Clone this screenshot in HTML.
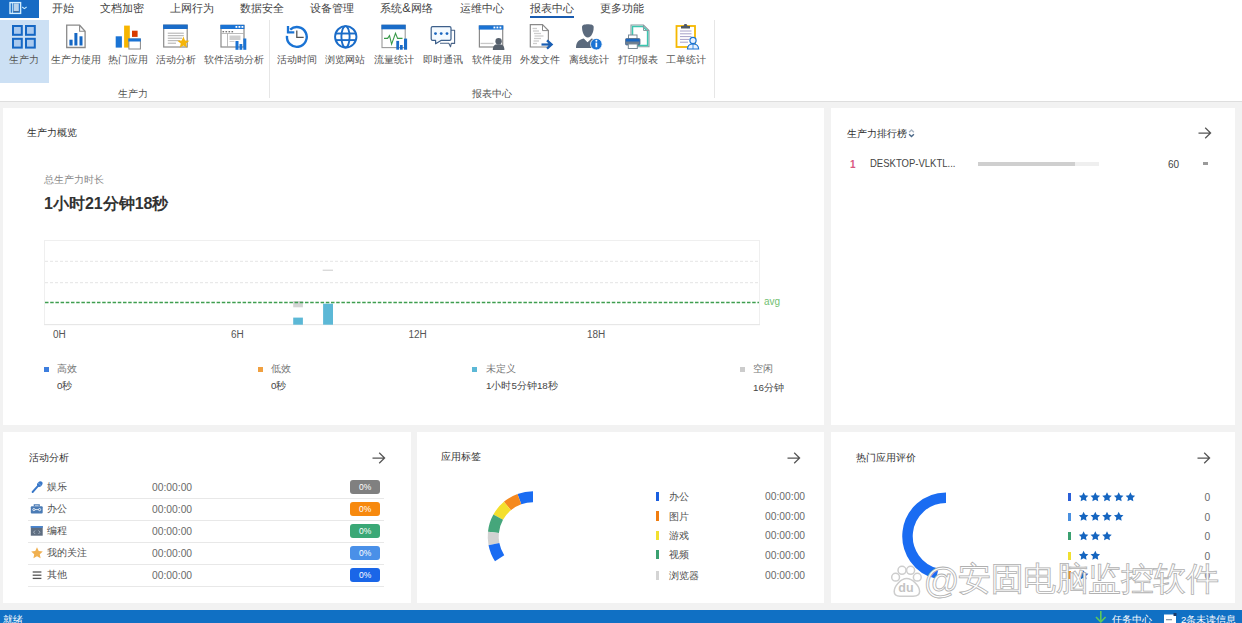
<!DOCTYPE html>
<html><head><meta charset="utf-8">
<style>
*{margin:0;padding:0;box-sizing:border-box}
html,body{width:1242px;height:623px;overflow:hidden;background:#f2f2f2;font-family:"Liberation Sans",sans-serif;color:#444}
.a{position:absolute;white-space:nowrap;line-height:1}
.c{width:120px;text-align:center}
#top{position:absolute;left:0;top:0;width:1242px;height:102px;background:#fff;border-bottom:1px solid #dedede}
.menu{font-size:11px;color:#444;top:2.5px}
.rl{font-size:9.6px;color:#555}
.gl{font-size:9.6px;color:#555}
.panel{position:absolute;background:#fff}
.pt{font-size:9.6px;color:#333}
#status{position:absolute;left:0;top:610px;width:1242px;height:13px;background:#1070c4}
.ax{font-size:10px;color:#555;top:329.5px}
.lg{font-size:9.8px;color:#777;top:363.5px}
.lv{font-size:9.8px;color:#444;top:381px}
.rw{font-size:9.6px;color:#505050}
.tm{font-size:10.3px;color:#6a6a6a}
.bd{width:30px;height:14px;border-radius:3px;color:#fff;font-size:8.5px;text-align:center;line-height:14px}
.sb{font-size:9.65px;color:#fff;top:615px}
.wm{font-size:32.5px;color:#fff;-webkit-text-stroke:0.8px #b0b0b0;font-weight:normal}

</style></head><body>
<div id="top">
<div class="a" style="left:0;top:0;width:38.5px;height:17.5px;background:#176bc4"></div>
<div class="a menu" style="left:52px">开始</div>
<div class="a menu" style="left:100px">文档加密</div>
<div class="a menu" style="left:170px">上网行为</div>
<div class="a menu" style="left:240px">数据安全</div>
<div class="a menu" style="left:310px">设备管理</div>
<div class="a menu" style="left:380px">系统<span style="font-size:12.5px;line-height:1px;margin:0 0.6px 0 0.3px">&amp;</span>网络</div>
<div class="a menu" style="left:460px">运维中心</div>
<div class="a menu" style="left:530px">报表中心</div>
<div class="a menu" style="left:600px">更多功能</div>
<div class="a" style="left:530px;top:15.5px;width:44px;height:2px;background:#1a5cb0"></div>
<div class="a" style="left:0;top:20px;width:48.5px;height:62.5px;background:#cce0f4"></div>
<div class="a c rl" style="left:-35.9px;top:55px;">生产力</div>
<div class="a c rl" style="left:16.0px;top:55px;">生产力使用</div>
<div class="a c rl" style="left:68.0px;top:55px;">热门应用</div>
<div class="a c rl" style="left:115.9px;top:55px;">活动分析</div>
<div class="a c rl" style="left:173.5px;top:55px;">软件活动分析</div>
<div class="a c rl" style="left:236.8px;top:55px;">活动时间</div>
<div class="a c rl" style="left:285.4px;top:55px;">浏览网站</div>
<div class="a c rl" style="left:334.2px;top:55px;">流量统计</div>
<div class="a c rl" style="left:382.8px;top:55px;">即时通讯</div>
<div class="a c rl" style="left:431.7px;top:55px;">软件使用</div>
<div class="a c rl" style="left:479.9px;top:55px;">外发文件</div>
<div class="a c rl" style="left:528.7px;top:55px;">离线统计</div>
<div class="a c rl" style="left:577.5px;top:55px;">打印报表</div>
<div class="a c rl" style="left:626.2px;top:55px;">工单统计</div>
<div class="a" style="left:269px;top:20px;width:1px;height:78px;background:#e6e6e6"></div>
<div class="a" style="left:714px;top:20px;width:1px;height:78px;background:#e6e6e6"></div>
<svg class="a" style="left:0;top:0" width="720" height="101" viewBox="0 0 720 101">
 <!-- top-left app menu icon -->
 <rect x="10" y="2.6" width="10.6" height="10.8" fill="none" stroke="#d4efff" stroke-width="1.4"/>
 <line x1="12.4" y1="3" x2="12.4" y2="13" stroke="#d4efff" stroke-width="0.9"/>
 <rect x="13.6" y="3.4" width="5.2" height="8.2" fill="#b8d2ea"/>
 <rect x="13.6" y="11" width="5.2" height="0.8" fill="#3a5a80"/>
 <path d="M22.2 7 L24.4 8.6 L26.6 7" fill="none" stroke="#c8ecff" stroke-width="1.1"/>
 <!-- 1 grid -->
 <g stroke="#1567c4" stroke-width="2" fill="#a9c9ee">
  <rect x="13" y="26" width="8.8" height="8.8"/>
  <rect x="26" y="26" width="8.8" height="8.8"/>
  <rect x="13" y="38.8" width="8.8" height="8.8"/>
  <rect x="26" y="38.8" width="8.8" height="8.8"/>
 </g>
 <!-- 2 doc with bars -->
 <path d="M66.7 25.2 H79.6 L85.1 31.3 V47.5 H66.7 Z" fill="#fff" stroke="#8a8a8a" stroke-width="1.3"/>
 <path d="M79.6 25.2 V31.3 H85.1" fill="none" stroke="#8a8a8a" stroke-width="1.1"/>
 <rect x="69.4" y="39.7" width="3.2" height="5.8" fill="#1567c4"/>
 <rect x="74.4" y="33" width="3" height="12.5" fill="#1567c4"/>
 <rect x="79.5" y="36.3" width="3" height="9.2" fill="#1567c4"/>
 <!-- 3 hot apps -->
 <rect x="115.7" y="36.3" width="6.2" height="11.3" fill="#1a73d4"/>
 <rect x="124.1" y="25.6" width="5.7" height="22" fill="#f7b500"/>
 <rect x="132" y="30.7" width="5.6" height="6.2" fill="#d83b01"/>
 <rect x="128.9" y="39" width="11.5" height="10" fill="#fff" stroke="#888" stroke-width="1"/>
 <rect x="128.4" y="38.5" width="12.4" height="3" fill="#1a73d4"/>
 <!-- 4 activity analysis -->
 <rect x="163.7" y="25.2" width="23.5" height="21.8" fill="#fff" stroke="#8a8a8a" stroke-width="1.2"/>
 <rect x="163.1" y="24.6" width="24.6" height="4.4" fill="#1a6cc8"/>
 <g stroke="#a4a4a4" stroke-width="0.9">
  <line x1="167.8" y1="33.2" x2="183.8" y2="33.2"/>
  <line x1="167.8" y1="35.7" x2="183.8" y2="35.7"/>
  <line x1="167.8" y1="38.2" x2="182" y2="38.2"/>
  <line x1="167.8" y1="40.7" x2="180" y2="40.7"/>
  <line x1="167.8" y1="43.2" x2="176" y2="43.2"/>
 </g>
 <polygon points="183.40,36.40 185.03,40.45 189.39,40.75 186.04,43.55 187.10,47.80 183.40,45.48 179.70,47.80 180.76,43.55 177.41,40.75 181.77,40.45" fill="#f5b50a"/>
 <!-- 5 software activity analysis -->
 <rect x="221" y="25.4" width="23" height="21.6" fill="#fff" stroke="#8a8a8a" stroke-width="1.2"/>
 <rect x="220.4" y="24.8" width="24" height="4.2" fill="#1a73d4"/>
 <g fill="#fff"><rect x="235.5" y="26" width="1.8" height="1.8"/><rect x="238.5" y="26" width="1.8" height="1.8"/><rect x="241.5" y="26" width="1.8" height="1.8"/></g>
 <g fill="#777"><rect x="222.5" y="31" width="1.6" height="1.4"/><rect x="225.5" y="31" width="1.6" height="1.4"/><rect x="228.5" y="31" width="1.6" height="1.4"/><rect x="231.5" y="31" width="1.6" height="1.4"/></g>
 <line x1="221" y1="33.5" x2="244" y2="33.5" stroke="#aaa" stroke-width="0.8"/>
 <line x1="227.5" y1="33.5" x2="227.5" y2="47" stroke="#aaa" stroke-width="0.8"/>
 <rect x="229.5" y="35.5" width="11" height="4.5" fill="#cfcfcf"/>
 <rect x="229.5" y="41" width="5" height="1" fill="#cfcfcf"/>
 <rect x="235.5" y="41" width="3" height="8.8" fill="#1a73d4"/>
 <rect x="239.5" y="44" width="2.8" height="5.8" fill="#1a73d4"/>
 <rect x="243.3" y="38.5" width="3" height="11.3" fill="#1a73d4"/>
 <!-- 6 clock -->
 <path d="M287 35.8 A9.9 9.9 0 1 0 290.2 29.6" fill="none" stroke="#1a73d4" stroke-width="2.4"/>
 <path d="M288 26 V32.3 H294.3" fill="none" stroke="#1a73d4" stroke-width="2.3" stroke-linejoin="miter"/>
 <path d="M296.8 30.4 V37.4 H303.7" fill="none" stroke="#555" stroke-width="1.3"/>
 <!-- 7 globe -->
 <g fill="none" stroke="#1a6cc8" stroke-width="1.9">
  <circle cx="345.75" cy="36.8" r="10.7"/>
  <ellipse cx="345.5" cy="36.8" rx="4.1" ry="10.7"/>
  <line x1="335.5" y1="33.5" x2="356" y2="33.5"/>
  <line x1="335.5" y1="40.1" x2="356" y2="40.1"/>
 </g>
 <!-- 8 traffic -->
 <rect x="382" y="25.3" width="23.2" height="22.3" fill="#fff" stroke="#9a9a9a" stroke-width="1.1"/>
 <rect x="381.4" y="24.7" width="24.3" height="4.6" fill="#1a6cc8"/>
 <path d="M384 38.4 H387.6 L389.5 35.6 L391.6 44.2 L395.5 33.3 L397.6 38.4 H402.5" fill="none" stroke="#3a9a4a" stroke-width="1.1"/>
 <rect x="396.3" y="40.9" width="2.8" height="8.8" fill="#1a6cc8"/>
 <rect x="400" y="45" width="2.7" height="4.7" fill="#1a6cc8"/>
 <rect x="404" y="38.6" width="3.1" height="11.1" fill="#1a6cc8"/>
 <!-- 9 chat -->
 <path d="M440 43.2 H448.8 L450.5 46.8 L451.3 43.4 H454.6 V30.2 H450.5" fill="none" stroke="#4a6488" stroke-width="1.1" stroke-linejoin="round"/>
 <path d="M432.6 26.6 H449.6 Q451 26.6 451 28 V39 Q451 40.4 449.6 40.4 H441 L435.6 43.8 V40.4 H432.6 Q431.2 40.4 431.2 39 V28 Q431.2 26.6 432.6 26.6 Z" fill="#f4faff" stroke="#3d5f8a" stroke-width="1.2" stroke-linejoin="round"/>
 <g fill="#1a66c0"><circle cx="435.5" cy="33.6" r="1.4"/><circle cx="441.2" cy="33.6" r="1.4"/><circle cx="447" cy="33.6" r="1.4"/></g>
 <!-- 10 software usage -->
 <rect x="479.4" y="26" width="23.3" height="21" fill="#fff" stroke="#8a8a8a" stroke-width="1.2"/>
 <rect x="478.8" y="25.4" width="24.5" height="4.2" fill="#1a73d4"/>
 <g fill="#fff"><rect x="493.5" y="26.6" width="1.8" height="1.8"/><rect x="496.5" y="26.6" width="1.8" height="1.8"/><rect x="499.5" y="26.6" width="1.8" height="1.8"/></g>
 <rect x="480.5" y="42.8" width="13" height="1.3" fill="#c8c8c8"/>
 <circle cx="498.6" cy="41.3" r="3.2" fill="#56606c"/>
 <path d="M492.8 50 C492.8 45.5 494.8 44.3 498.6 44.3 C502.4 44.3 504.4 45.5 504.4 50 Z" fill="#56606c"/>
 <!-- 11 outgoing file -->
 <path d="M530.3 24.6 H542.5 L548.4 30.6 V47 H530.3 Z" fill="#fff" stroke="#8a8a8a" stroke-width="1.2"/>
 <path d="M542.5 24.6 V30.6 H548.4" fill="none" stroke="#8a8a8a" stroke-width="1"/>
 <g stroke="#cdcdcd" stroke-width="1.3">
  <line x1="532.5" y1="28.5" x2="537" y2="28.5"/><line x1="533" y1="31" x2="539" y2="31"/>
  <line x1="534" y1="33.5" x2="541" y2="33.5"/><line x1="534.5" y1="36" x2="543.5" y2="36"/>
  <line x1="534" y1="38.5" x2="541" y2="38.5"/><line x1="533.5" y1="41" x2="539" y2="41"/>
  <line x1="533" y1="43.5" x2="537" y2="43.5"/>
 </g>
 <path d="M541.5 44.5 H551" stroke="#1a5fb4" stroke-width="2.2"/>
 <path d="M547 40.3 L551.6 44.5 L547 48.7" fill="none" stroke="#1a5fb4" stroke-width="2.3"/>
 <!-- 12 offline person -->
 <path d="M582 27 C582 24.8 584.5 24.2 587.8 24.2 C591.1 24.2 593.7 24.8 593.7 27 C593.7 32 591.5 37.4 587.8 37.4 C584.1 37.4 582 32 582 27 Z" fill="#5b6a7d"/>
 <path d="M576 48 C576 42 578.5 39.7 583.8 38.5 L587.5 42.3 L591.6 38.5 C595 39.2 597 40.5 598 42 L595 48 Z" fill="#5b6a7d"/>
 <path d="M584.6 38.4 L587.5 41.6 L590.6 38.4" fill="none" stroke="#fff" stroke-width="0.9"/>
 <circle cx="596.3" cy="44.2" r="5.8" fill="#1a73d4" stroke="#fff" stroke-width="0.8"/>
 <rect x="595.5" y="42.6" width="1.7" height="4.6" fill="#fff"/>
 <circle cx="596.35" cy="40.8" r="1" fill="#fff"/>
 <!-- 13 print -->
 <path d="M631 25 H643.5 L649 30.5 V46.8 H631 Z" fill="#fff" stroke="#8a9aa0" stroke-width="1.1"/>
 <path d="M632.5 26.5 H642.8 L647.6 31.2 V45.5 H632.5 Z" fill="none" stroke="#3cc6b0" stroke-width="1.5"/>
 <path d="M643.5 25 V30.5 H649" fill="none" stroke="#8a9aa0" stroke-width="1"/>
 <rect x="628.5" y="35" width="8.5" height="4" fill="#fff" stroke="#7a8a96" stroke-width="1"/>
 <rect x="625.5" y="38.5" width="14.5" height="6.5" rx="1" fill="#1a66c0" stroke="#5a7088" stroke-width="0.8"/>
 <rect x="626" y="41.5" width="13.5" height="3" fill="#6c7d8f"/>
 <rect x="628.3" y="44" width="9" height="4.5" fill="#fff" stroke="#7a8a96" stroke-width="1"/>
 <!-- 14 work order -->
 <rect x="676.5" y="26" width="18.5" height="21" fill="#fff" stroke="#f5b800" stroke-width="1.8"/>
 <path d="M681 28.5 V26 H683.5 L684.5 24 L686.5 24 L687.5 26 H690 V28.5 Z" fill="#505a66"/>
 <g stroke="#a6a2c8" stroke-width="1">
  <line x1="680" y1="31" x2="691.5" y2="31"/><line x1="680" y1="33.8" x2="691.5" y2="33.8"/>
  <line x1="680" y1="36.6" x2="691.5" y2="36.6"/><line x1="680" y1="39.4" x2="689" y2="39.4"/>
  <line x1="680" y1="42.2" x2="688" y2="42.2"/>
 </g>
 <path d="M687.5 49 C687.5 45 689.5 44 693 44 C696.5 44 698.6 45 698.6 49 Z" fill="#e8f2ff" stroke="#1a73d4" stroke-width="1.2"/>
 <circle cx="693" cy="40.5" r="3.1" fill="#e8f2ff" stroke="#1a73d4" stroke-width="1.2"/>
 <line x1="693" y1="44" x2="693" y2="49" stroke="#1a73d4" stroke-width="0.8"/>
</svg>

<div class="a c gl" style="left:72.5px;top:89px;">生产力</div>
<div class="a c gl" style="left:431.5px;top:89px;">报表中心</div>
</div>
<div class="panel" style="left:3px;top:108px;width:821px;height:317px"></div>
<div class="panel" style="left:831px;top:108px;width:404px;height:317px"></div>
<div class="panel" style="left:3px;top:432px;width:408px;height:171px"></div>
<div class="panel" style="left:417px;top:432px;width:407px;height:171px"></div>
<div class="panel" style="left:831px;top:432px;width:404px;height:171px"></div>

<div class="a pt" style="left:27px;top:128px">生产力概览</div>
<div class="a" style="left:44px;top:175px;font-size:9.5px;color:#888">总生产力时长</div>
<div class="a" style="left:44px;top:196px;font-size:16px;font-weight:bold;color:#333">1小时21分钟18秒</div>

<svg class="a" style="left:0;top:230px" width="830" height="110" viewBox="0 230 830 110">
 <rect x="44.5" y="240.5" width="715" height="84" fill="none" stroke="#efefef" stroke-width="1"/>
 <line x1="45" y1="261.3" x2="759" y2="261.3" stroke="#e2e2e2" stroke-width="0.9" stroke-dasharray="3 2"/>
 <line x1="45" y1="282.7" x2="759" y2="282.7" stroke="#e2e2e2" stroke-width="0.9" stroke-dasharray="3 2"/>
 <line x1="44" y1="324.7" x2="760" y2="324.7" stroke="#e6e6e6" stroke-width="1"/>
 <line x1="322.7" y1="270.2" x2="333" y2="270.2" stroke="#c4c4c4" stroke-width="0.9"/>
 <rect x="293.2" y="301" width="9.7" height="6.3" fill="#d4d4d4"/>
 <rect x="293.2" y="317.6" width="9.7" height="7.1" fill="#5cb8d6"/>
 <rect x="323.1" y="303.7" width="9.9" height="21" fill="#5cb8d6"/>
 <line x1="45" y1="302.5" x2="759" y2="302.5" stroke="#3f9e4f" stroke-width="1.3" stroke-dasharray="3.5 1.7"/>
</svg>
<div class="a" style="left:764px;top:297px;font-size:10px;color:#72bf72">avg</div>
<div class="a ax" style="left:53px">0H</div>
<div class="a ax" style="left:231px">6H</div>
<div class="a ax" style="left:408.5px">12H</div>
<div class="a ax" style="left:587px">18H</div>

<div class="a" style="left:43.7px;top:367px;width:5px;height:4.5px;background:#3d7ede"></div>
<div class="a lg" style="left:57px">高效</div>
<div class="a lv" style="left:57px">0秒</div>
<div class="a" style="left:257.7px;top:367px;width:5px;height:4.5px;background:#f0a040"></div>
<div class="a lg" style="left:271px">低效</div>
<div class="a lv" style="left:271px">0秒</div>
<div class="a" style="left:472.4px;top:367px;width:5px;height:4.5px;background:#5cb8d6"></div>
<div class="a lg" style="left:486px">未定义</div>
<div class="a lv" style="left:486px">1小时5分钟18秒</div>
<div class="a" style="left:739.6px;top:367px;width:5px;height:4.5px;background:#cccccc"></div>
<div class="a lg" style="left:753px">空闲</div>
<div class="a lv" style="left:753px;top:382.5px">16分钟</div>

<div class="a pt" style="left:847px;top:129px">生产力排行榜</div>
<svg class="a" style="left:908px;top:128px" width="8" height="10" viewBox="0 0 8 10">
 <path d="M1.1 4.2 L3.5 1.9 L5.9 4.2" fill="none" stroke="#aab6c4" stroke-width="1.4"/>
 <path d="M1.1 6.2 L3.5 8.5 L5.9 6.2" fill="none" stroke="#4a6888" stroke-width="1.4"/>
</svg>
<div class="a" style="left:850px;top:159.5px;font-size:10px;font-weight:bold;color:#d9587f">1</div>
<div class="a" style="left:870px;top:159.3px;font-size:10.4px;color:#444;transform:scaleX(0.915);transform-origin:0 0">DESKTOP-VLKTL...</div>
<div class="a" style="left:978px;top:162px;width:120.6px;height:3.8px;background:#efefef"></div>
<div class="a" style="left:978px;top:162px;width:96.8px;height:3.8px;background:#cfcfcf"></div>
<div class="a" style="left:1168px;top:160px;font-size:10px;color:#444">60</div>
<div class="a" style="left:1202.5px;top:162px;width:5.8px;height:2.8px;background:#9a9a9a"></div>

<svg class="a" style="left:1198px;top:127px" width="14" height="12" viewBox="0 0 14 12"><path d="M0.5 6 H12.6 M7.2 0.8 L12.6 6 L7.2 11.2" fill="none" stroke="#555" stroke-width="1.25"/></svg>
<div class="a pt" style="left:28.5px;top:453px">活动分析</div>
<svg class="a" style="left:371.5px;top:451.5px" width="14" height="12" viewBox="0 0 14 12"><path d="M0.5 6 H12.6 M7.2 0.8 L12.6 6 L7.2 11.2" fill="none" stroke="#555" stroke-width="1.25"/></svg>
<div class="a rw" style="left:46.5px;top:481.5px">娱乐</div>
<div class="a tm" style="left:152px;top:483.0px">00:00:00</div>
<div class="a bd" style="left:350.2px;top:480px;background:#808080">0%</div>
<div class="a" style="left:28px;top:498px;width:356px;height:1px;background:#e8e8e8"></div>
<div class="a rw" style="left:46.5px;top:503.5px">办公</div>
<div class="a tm" style="left:152px;top:505.0px">00:00:00</div>
<div class="a bd" style="left:350.2px;top:502px;background:#f7890e">0%</div>
<div class="a" style="left:28px;top:520px;width:356px;height:1px;background:#e8e8e8"></div>
<div class="a rw" style="left:46.5px;top:525.5px">编程</div>
<div class="a tm" style="left:152px;top:527.0px">00:00:00</div>
<div class="a bd" style="left:350.2px;top:524px;background:#3aa876">0%</div>
<div class="a" style="left:28px;top:542px;width:356px;height:1px;background:#e8e8e8"></div>
<div class="a rw" style="left:46.5px;top:547.5px">我的关注</div>
<div class="a tm" style="left:152px;top:549.0px">00:00:00</div>
<div class="a bd" style="left:350.2px;top:546px;background:#4a90e8">0%</div>
<div class="a" style="left:28px;top:564px;width:356px;height:1px;background:#e8e8e8"></div>
<div class="a rw" style="left:46.5px;top:569.5px">其他</div>
<div class="a tm" style="left:152px;top:571.0px">00:00:00</div>
<div class="a bd" style="left:350.2px;top:568px;background:#1a66e8">0%</div>
<div class="a" style="left:28px;top:586px;width:356px;height:1px;background:#e8e8e8"></div>
<svg class="a" style="left:28px;top:478px" width="18" height="106" viewBox="28 478 18 106">
 <path d="M32.6 492 L37.6 486.3" stroke="#3a78c8" stroke-width="1.9" stroke-linecap="round"/>
 <ellipse cx="39.8" cy="484.1" rx="3.1" ry="2.3" transform="rotate(-48 39.8 484.1)" fill="#3a78c8"/>
 <line x1="38" y1="482.8" x2="41.2" y2="485.6" stroke="#9cc0ea" stroke-width="0.6"/>
 <rect x="30.8" y="506.3" width="11.9" height="7.3" rx="1" fill="#4a7bb5"/>
 <path d="M34.3 506.3 V504.9 H39.2 V506.3" fill="none" stroke="#4a7bb5" stroke-width="1.2"/>
 <circle cx="33.9" cy="509.6" r="1.1" fill="none" stroke="#fff" stroke-width="0.8"/>
 <circle cx="39.6" cy="509.6" r="1.1" fill="none" stroke="#fff" stroke-width="0.8"/>
 <line x1="35" y1="509.6" x2="38.5" y2="509.6" stroke="#fff" stroke-width="0.8"/>
 <rect x="30.8" y="526" width="11.9" height="9.7" fill="#5e6d80"/>
 <rect x="30.8" y="526" width="11.9" height="1.8" fill="#4a86d0"/>
 <path d="M35 530.5 L33.6 532.2 L35 533.9 M38.6 530.5 L40 532.2 L38.6 533.9" fill="none" stroke="#b8c4d2" stroke-width="0.8"/>
 <polygon points="37.00,547.20 38.72,550.93 42.80,551.41 39.78,554.20 40.59,558.24 37.00,556.23 33.41,558.24 34.22,554.20 31.20,551.41 35.28,550.93" fill="#f0b050"/>
 <g stroke="#555" stroke-width="1.3"><line x1="32.7" y1="572" x2="41.4" y2="572"/><line x1="32.7" y1="575.2" x2="41.4" y2="575.2"/><line x1="32.7" y1="578.4" x2="41.4" y2="578.4"/></g>
</svg>
<div class="a pt" style="left:441px;top:452px">应用标签</div>
<svg class="a" style="left:787px;top:451.5px" width="14" height="12" viewBox="0 0 14 12"><path d="M0.5 6 H12.6 M7.2 0.8 L12.6 6 L7.2 11.2" fill="none" stroke="#555" stroke-width="1.25"/></svg>
<svg class="a" style="left:470px;top:480px" width="80" height="100" viewBox="470 480 80 100"><path d="M533.00 496.70 A39.8 39.8 0 0 0 519.39 499.10" fill="none" stroke="#1a6cf2" stroke-width="11"/><path d="M519.39 499.10 A39.8 39.8 0 0 0 507.42 506.01" fill="none" stroke="#f5891f" stroke-width="11"/><path d="M507.42 506.01 A39.8 39.8 0 0 0 498.19 517.20" fill="none" stroke="#f4df2c" stroke-width="11"/><path d="M498.19 517.20 A39.8 39.8 0 0 0 493.42 532.34" fill="none" stroke="#45a67b" stroke-width="11"/><path d="M493.42 532.34 A39.8 39.8 0 0 0 493.93 544.09" fill="none" stroke="#d2d2d2" stroke-width="11"/><path d="M493.93 544.09 A39.8 39.8 0 0 0 499.62 558.18" fill="none" stroke="#1a6cf2" stroke-width="11"/></svg>
<div class="a" style="left:656px;top:491.7px;width:2.5px;height:9.6px;background:#1a5fe0"></div>
<div class="a rw" style="left:669.2px;top:492.0px">办公</div>
<div class="a tm" style="left:765px;top:492.3px">00:00:00</div>
<div class="a" style="left:656px;top:511.2px;width:2.5px;height:9.6px;background:#f07d10"></div>
<div class="a rw" style="left:669.2px;top:511.5px">图片</div>
<div class="a tm" style="left:765px;top:511.8px">00:00:00</div>
<div class="a" style="left:656px;top:530.7px;width:2.5px;height:9.6px;background:#f2e030"></div>
<div class="a rw" style="left:669.2px;top:531.0px">游戏</div>
<div class="a tm" style="left:765px;top:531.3px">00:00:00</div>
<div class="a" style="left:656px;top:549.9px;width:2.5px;height:9.6px;background:#3aa070"></div>
<div class="a rw" style="left:669.2px;top:550.2px">视频</div>
<div class="a tm" style="left:765px;top:550.5px">00:00:00</div>
<div class="a" style="left:656px;top:570.6px;width:2.5px;height:9.6px;background:#d4d4d4"></div>
<div class="a rw" style="left:669.2px;top:570.9px">浏览器</div>
<div class="a tm" style="left:765px;top:571.2px">00:00:00</div>
<div class="a pt" style="left:856px;top:453px">热门应用评价</div>
<svg class="a" style="left:1196.5px;top:451.5px" width="14" height="12" viewBox="0 0 14 12"><path d="M0.5 6 H12.6 M7.2 0.8 L12.6 6 L7.2 11.2" fill="none" stroke="#555" stroke-width="1.25"/></svg>
<svg class="a" style="left:880px;top:480px" width="100" height="110" viewBox="880 480 100 110"><path d="M946.00 497.70 A38.5 38.5 0 0 0 937.34 573.71" fill="none" stroke="#1a6cf2" stroke-width="10.5"/></svg>
<div class="a" style="left:1068px;top:493px;width:3px;height:8px;background:#2a5fd8"></div>
<div class="a tm" style="left:1204.5px;top:493.2px">0</div>
<div class="a" style="left:1068px;top:512.5px;width:3px;height:8px;background:#4a90e0"></div>
<div class="a tm" style="left:1204.5px;top:512.7px">0</div>
<div class="a" style="left:1068px;top:532px;width:3px;height:8px;background:#3aa070"></div>
<div class="a tm" style="left:1204.5px;top:532.2px">0</div>
<div class="a" style="left:1068px;top:551.5px;width:3px;height:8px;background:#f0e030"></div>
<div class="a tm" style="left:1204.5px;top:551.7px">0</div>
<div class="a" style="left:1068px;top:571px;width:3px;height:8px;background:#f09020"></div>
<div class="a tm" style="left:1204.5px;top:571.2px">0</div>
<svg class="a" style="left:1070px;top:480px" width="80" height="110" viewBox="1070 480 80 110"><g fill="#1565c0"><polygon points="1083.60,492.30 1085.07,495.28 1088.36,495.75 1085.98,498.07 1086.54,501.35 1083.60,499.80 1080.66,501.35 1081.22,498.07 1078.84,495.75 1082.13,495.28"/><polygon points="1095.30,492.30 1096.77,495.28 1100.06,495.75 1097.68,498.07 1098.24,501.35 1095.30,499.80 1092.36,501.35 1092.92,498.07 1090.54,495.75 1093.83,495.28"/><polygon points="1107.00,492.30 1108.47,495.28 1111.76,495.75 1109.38,498.07 1109.94,501.35 1107.00,499.80 1104.06,501.35 1104.62,498.07 1102.24,495.75 1105.53,495.28"/><polygon points="1118.70,492.30 1120.17,495.28 1123.46,495.75 1121.08,498.07 1121.64,501.35 1118.70,499.80 1115.76,501.35 1116.32,498.07 1113.94,495.75 1117.23,495.28"/><polygon points="1130.40,492.30 1131.87,495.28 1135.16,495.75 1132.78,498.07 1133.34,501.35 1130.40,499.80 1127.46,501.35 1128.02,498.07 1125.64,495.75 1128.93,495.28"/><polygon points="1083.60,511.80 1085.07,514.78 1088.36,515.25 1085.98,517.57 1086.54,520.85 1083.60,519.30 1080.66,520.85 1081.22,517.57 1078.84,515.25 1082.13,514.78"/><polygon points="1095.30,511.80 1096.77,514.78 1100.06,515.25 1097.68,517.57 1098.24,520.85 1095.30,519.30 1092.36,520.85 1092.92,517.57 1090.54,515.25 1093.83,514.78"/><polygon points="1107.00,511.80 1108.47,514.78 1111.76,515.25 1109.38,517.57 1109.94,520.85 1107.00,519.30 1104.06,520.85 1104.62,517.57 1102.24,515.25 1105.53,514.78"/><polygon points="1118.70,511.80 1120.17,514.78 1123.46,515.25 1121.08,517.57 1121.64,520.85 1118.70,519.30 1115.76,520.85 1116.32,517.57 1113.94,515.25 1117.23,514.78"/><polygon points="1083.60,531.30 1085.07,534.28 1088.36,534.75 1085.98,537.07 1086.54,540.35 1083.60,538.80 1080.66,540.35 1081.22,537.07 1078.84,534.75 1082.13,534.28"/><polygon points="1095.30,531.30 1096.77,534.28 1100.06,534.75 1097.68,537.07 1098.24,540.35 1095.30,538.80 1092.36,540.35 1092.92,537.07 1090.54,534.75 1093.83,534.28"/><polygon points="1107.00,531.30 1108.47,534.28 1111.76,534.75 1109.38,537.07 1109.94,540.35 1107.00,538.80 1104.06,540.35 1104.62,537.07 1102.24,534.75 1105.53,534.28"/><polygon points="1083.60,550.80 1085.07,553.78 1088.36,554.25 1085.98,556.57 1086.54,559.85 1083.60,558.30 1080.66,559.85 1081.22,556.57 1078.84,554.25 1082.13,553.78"/><polygon points="1095.30,550.80 1096.77,553.78 1100.06,554.25 1097.68,556.57 1098.24,559.85 1095.30,558.30 1092.36,559.85 1092.92,556.57 1090.54,554.25 1093.83,553.78"/><polygon points="1083.60,570.30 1085.07,573.28 1088.36,573.75 1085.98,576.07 1086.54,579.35 1083.60,577.80 1080.66,579.35 1081.22,576.07 1078.84,573.75 1082.13,573.28"/></g></svg>
<div id="status"></div>
<div class="a sb" style="left:3px">就绪</div>
<svg class="a" style="left:1094px;top:610px" width="14" height="13" viewBox="0 0 14 13"><path d="M6.8 1 V12 M2 7 L6.8 12 L11.6 7" fill="none" stroke="#5cc85c" stroke-width="1.6"/></svg>
<div class="a sb" style="left:1112px">任务中心</div>
<svg class="a" style="left:1163px;top:612px" width="15" height="11" viewBox="0 0 15 11"><rect x="1" y="2.5" width="12" height="9" fill="#fff"/><rect x="3" y="7" width="6" height="1.3" fill="#8a9aaa"/><rect x="10.5" y="1" width="3" height="3" fill="#1a3a6a"/></svg>
<div class="a sb" style="left:1181px">2条未读信息</div>
<svg class="a" style="left:886px;top:560px" width="40" height="40" viewBox="886 560 40 40">
 <g fill="#fff" stroke="#cdcdcd" stroke-width="1.5">
  <circle cx="902" cy="570.3" r="4"/>
  <circle cx="910.6" cy="570.3" r="4"/>
  <circle cx="895.6" cy="577.2" r="3.9"/>
  <circle cx="917.3" cy="577.2" r="3.9"/>
  <path d="M906.6 578.6 C901 578.6 894.2 586 894.2 591.5 C894.2 595 896.5 596.2 900 596.2 H913 C916.5 596.2 919.6 595 919.6 591.5 C919.6 586 912.5 578.6 906.6 578.6 Z"/>
 </g>
</svg>
<div class="a" style="left:898.3px;top:582px;font-size:12.5px;font-weight:bold;color:#c4c4c4">du</div>
<div class="a wm" style="left:923.5px;top:564px;font-size:35.5px">@</div><div class="a wm" style="left:958px;top:563px;letter-spacing:-0.5px">安固电脑监控软件</div>
</body></html>
